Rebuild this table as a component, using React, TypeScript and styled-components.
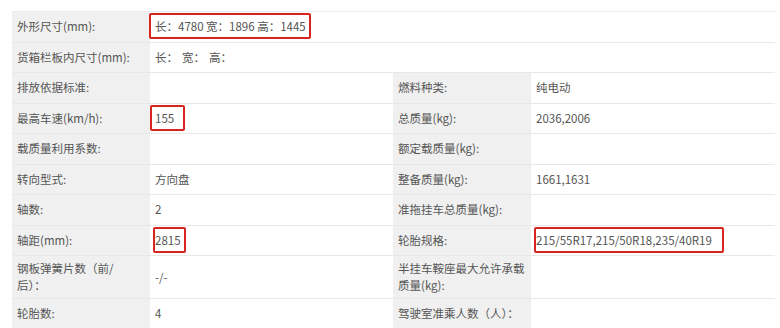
import styled, { createGlobalStyle } from "styled-components";

const GlobalStyle = createGlobalStyle`
  body {
    margin: 0;
    background: #fff;
    font-family: "Noto Sans CJK SC", "Noto Sans", sans-serif;
  }
`;

const Page = styled.div`
  padding: 11px 5px 0 12px;
  width: 780px;
  height: 328px;
  box-sizing: border-box;
  overflow: hidden;
`;

const Table = styled.div`
  display: grid;
  grid-template-columns: 138px 243px 138px 244px;
  border-top: 1px solid #ececec;
  border-right: 1px solid #e6e6e6;
  font-size: 11.5px;
  color: #555;
`;

const Cell = styled.div<{ $label?: boolean; $span?: number; $tall?: boolean }>`
  grid-column: span ${(p) => p.$span ?? 1};
  display: flex;
  align-items: center;
  box-sizing: border-box;
  min-height: 30.5px;
  padding: ${(p) => (p.$tall ? "4px 2px 4px 5px" : "0 5px")};
  line-height: 17px;
  background: ${(p) => (p.$label ? "#f0f0f0" : "#fff")};
  border-bottom: 1px solid #e8e8e8;
  color: #555;
  white-space: ${(p) => (p.$tall ? "normal" : "nowrap")};
`;

const Mark = styled.span<{ $l: number; $r: number }>`
  position: relative;
  &::after {
    content: "";
    position: absolute;
    left: ${(p) => p.$l}px;
    right: ${(p) => p.$r}px;
    top: -5px;
    bottom: -4px;
    border: 2px solid #d8241f;
    border-radius: 2px;
  }
`;

const Gap = styled.span`
  display: inline-block;
  width: 4px;
`;

type Row =
  | { kind: "full"; label: string; value: React.ReactNode }
  | { kind: "pair"; cells: [React.ReactNode, React.ReactNode, React.ReactNode, React.ReactNode]; tall?: boolean };

const rows: Row[] = [
  {
    kind: "full",
    label: "外形尺寸(mm):",
    value: (
      <Mark $l={-6} $r={-5}>
        长：4780 宽：1896 高：1445
      </Mark>
    ),
  },
  {
    kind: "full",
    label: "货箱栏板内尺寸(mm):",
    value: (
      <>
        长：<Gap />宽：<Gap />高：
      </>
    ),
  },
  { kind: "pair", cells: ["排放依据标准:", "", "燃料种类:", "纯电动"] },
  {
    kind: "pair",
    cells: [
      "最高车速(km/h):",
      <Mark $l={-5} $r={-11}>155</Mark>,
      "总质量(kg):",
      "2036,2006",
    ],
  },
  { kind: "pair", cells: ["载质量利用系数:", "", "额定载质量(kg):", ""] },
  { kind: "pair", cells: ["转向型式:", "方向盘", "整备质量(kg):", "1661,1631"] },
  { kind: "pair", cells: ["轴数:", "2", "准拖挂车总质量(kg):", ""] },
  {
    kind: "pair",
    cells: [
      "轴距(mm):",
      <Mark $l={-2} $r={-5}>2815</Mark>,
      "轮胎规格:",
      <Mark $l={-2} $r={-12}>215/55R17,215/50R18,235/40R19</Mark>,
    ],
  },
  {
    kind: "pair",
    tall: true,
    cells: [
      <span>
        钢板弹簧片数（前/
        <br />
        后）：
      </span>,
      "-/-",
      <span>
        半挂车鞍座最大允许承载
        <br />
        质量(kg):
      </span>,
      "",
    ],
  },
  { kind: "pair", cells: ["轮胎数:", "4", "驾驶室准乘人数（人）：", ""] },
];

const App = () => {
  return (
    <>
      <GlobalStyle />
      <Page>
        <Table>
          {rows.map((row, i) =>
            row.kind === "full" ? (
              <>
                <Cell key={`l${i}`} $label>
                  {row.label}
                </Cell>
                <Cell key={`v${i}`} $span={3}>
                  {row.value}
                </Cell>
              </>
            ) : (
              row.cells.map((c, j) => (
                <Cell key={`${i}-${j}`} $label={j % 2 === 0} $tall={row.tall}>
                  {c}
                </Cell>
              ))
            )
          )}
        </Table>
      </Page>
    </>
  );
};

export default App;
